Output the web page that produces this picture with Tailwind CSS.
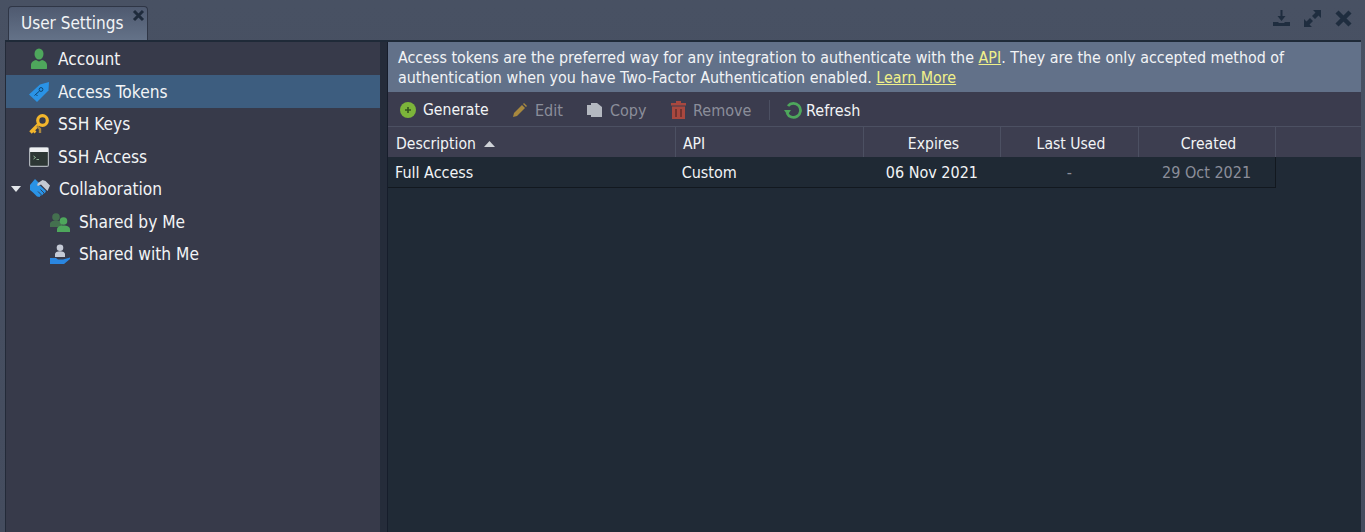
<!DOCTYPE html>
<html lang="en">
<head>
  <meta charset="UTF-8">
  <title>User Settings</title>
  <script src="https://cdn.jsdelivr.net/npm/@tailwindcss/browser@4"></script>
</head>
<body class="bg-[#475062] font-['DejaVu_Sans_Condensed','Noto_Sans',sans-serif] text-[16px] text-[#f2f4f6] overflow-hidden">
  <div class="w-[1365px] h-[532px] flex flex-col bg-gradient-to-b from-[#485163] to-[#444c5e]">
    <!-- tabs -->
    <div class="h-[40px] flex items-end justify-between pl-[8px] pr-[13px] shrink-0">
      <div class="relative w-[140px] h-[34px] bg-gradient-to-b from-[#4f5a70] to-[#647288] border border-[#2f3646] border-b-0 rounded-t-[4px] pl-[12px] pt-[3px] text-[17px] leading-[26px]">
        User Settings
        <svg class="absolute right-[2px] top-[2px]" width="13" height="13" viewBox="0 0 13 13"><path d="M2 2l9 9M11 2l-9 9" stroke="#1f2b3c" stroke-width="3"/></svg>
      </div>
      <div class="flex items-center gap-[14px] pb-[13px]">
        <svg width="17" height="17" viewBox="0 0 17 17" fill="#1f2d3f"><path d="M7.500 0h2v6h3l-4 5-4-5h3z"/><path d="M0 12h5l1 1h5l1-1h5v4H0z"/></svg>
        <svg width="17" height="17" viewBox="0 0 17 17" fill="#1f2d3f"><path d="M9 0H17V8L14.500 5.500 11 9 8 6 11.500 2.500z"/><path d="M8 17H0V9L2.500 11.500 6 8 9 11 5.500 14.500z"/></svg>
        <svg width="17" height="17" viewBox="0 0 17 17"><path d="M2 2l13 13M15 2 2 15" stroke="#1f2d3f" stroke-width="4.400"/></svg>
      </div>
    </div>
    <div class="flex-1 flex ml-[5px] mr-[4px] border-t-2 border-[#1f2a38] min-h-0">
      <!-- left tree -->
      <div class="w-[375px] bg-[#373a4a] border-l border-[#232a38] pt-[1px] shrink-0 text-[17.2px]">
        <div class="h-[32px] flex items-center pl-[23px] gap-[9px]">
          <svg width="20" height="22" viewBox="0 0 20 22" fill="#4ea75c"><ellipse cx="10" cy="6" rx="4.500" ry="5.500"/><path d="M3 21c-1 0-1-.5-1-1.500V17c0-3 3-4.500 5-5l3 1.500 3-1.500c2 .5 5 2 5 5v2.500c0 1 0 1.500-1 1.500z"/></svg>
          <span class="mt-[2px]">Account</span>
        </div>
        <div class="h-[33px] flex items-center pl-[23px] gap-[9px] bg-[#3d5d7f]">
          <svg width="20" height="20" viewBox="0 0 20 20"><path d="M0 12.500 11 2.500 20 0 19.500 8.500 8 20z" fill="#2a93e6"/><circle cx="12" cy="7.500" r="1.900" fill="none" stroke="#0f4470" stroke-width="1"/><path d="M10.500 9 5.500 13.500M7 12.500l1.500 1.500" stroke="#0f4470" stroke-width="1" fill="none"/></svg>
          <span class="mt-[2px]">Access Tokens</span>
        </div>
        <div class="h-[32px] flex items-center pl-[23px] gap-[9px]">
          <svg width="20" height="20" viewBox="0 0 20 20"><circle cx="13.500" cy="6.500" r="4.800" fill="none" stroke="#f3b62c" stroke-width="3.200"/><path d="M10 10 1.500 18.500" stroke="#f3b62c" stroke-width="3.600"/><path d="M8 12l3 3v4" stroke="#a98740" stroke-width="2.400" fill="none"/><path d="M4 16l2.500 2.500" stroke="#f3b62c" stroke-width="2.600"/></svg>
          <span class="mt-[2px]">SSH Keys</span>
        </div>
        <div class="h-[33px] flex items-center pl-[23px] gap-[9px]">
          <svg width="20" height="20" viewBox="0 0 20 20"><rect x=".6" y=".6" width="18.800" height="18.800" rx="1.500" fill="#2d3735" stroke="#aeb3ba" stroke-width="1.200"/><path d="M1 1h18v4H1z" fill="#eef0f2"/><path d="M4.500 9l2 1.500-2 1.500M7.500 12.500h2.500" stroke="#a9d4b0" fill="none" stroke-width=".8"/></svg>
          <span class="mt-[2px]">SSH Access</span>
        </div>
        <div class="h-[32px] flex items-center pl-[5px]">
          <svg class="mr-[9px]" width="10" height="6" viewBox="0 0 10 6" fill="#e3e6ea"><path d="M0 0h10L5 6z"/></svg>
          <svg class="mr-[9px]" width="20" height="20" viewBox="0 0 20 20"><path d="M0 6 5 0l4 4-2 2 3 .5 6 5.500-1 2-1.500.5-1 1.500-2 .5-1 1.500-2.500-.5-4-4-3-2.500z" fill="#2a93e6"/><path d="M8 4l4.500-3 3 1L20 6.500 17.500 12l-6.500-6.500-3 1.500-1-1z" fill="#c4c9d2"/><path d="M8 12.500l3.500 3.500M10.500 10.500l3.500 3.500" stroke="#373a4a" stroke-width=".9"/></svg>
          <span class="mt-[2px]">Collaboration</span>
        </div>
        <div class="h-[33px] flex items-center pl-[44px] gap-[9px]">
          <svg width="20" height="20" viewBox="0 0 20 20"><circle cx="6" cy="5" r="3.800" fill="#44704f"/><path d="M0 15v-3c0-2 2.500-3.500 6-3.500s5 1 6 3v3.500z" fill="#44704f"/><circle cx="13.500" cy="9" r="3.800" fill="#4ea75c"/><path d="M7 20v-2.800c0-2.200 3-3.700 6.500-3.700s6.500 1.500 6.500 3.700V20z" fill="#4ea75c"/></svg>
          <span class="mt-[2px]">Shared by Me</span>
        </div>
        <div class="h-[32px] flex items-center pl-[44px] gap-[9px]">
          <svg width="20" height="20" viewBox="0 0 20 20"><circle cx="10" cy="3.800" r="3.300" fill="#c5cad6"/><path d="M5 13v-3c0-1.600 2-2.800 5-2.800s5 1.200 5 2.800v3z" fill="#c5cad6"/><path d="M0 14h6l2 1.500h5l7-2v1.500l-6 5H0z" fill="#2a86e0"/></svg>
          <span class="mt-[2px]">Shared with Me</span>
        </div>
      </div>
      <!-- splitter -->
      <div class="w-[8px] bg-[#252c3a] border-r border-[#161d2b] shrink-0"></div>
      <!-- content -->
      <div class="flex-1 bg-[#202a36] flex flex-col min-w-0">
        <div class="h-[50px] bg-[#627189] px-[10px] pt-[6px] leading-[20px] text-[15.9px] shrink-0">
          Access tokens are the preferred way for any integration to authenticate with the <a class="text-[#f0f08a] underline">API</a>. They are the only accepted method of<br>
          authentication when you have Two-Factor Authentication enabled. <a class="text-[#f0f08a] underline">Learn More</a>
        </div>
        <div class="h-[35px] bg-[#3b3c4e] flex items-center pl-[12px] pt-[2px] border-b border-[#4c5062] shrink-0">
          <div class="flex items-center gap-[7px] w-[113px]">
            <svg width="16" height="16" viewBox="0 0 16 16"><circle cx="8" cy="8" r="8" fill="#7cb53a"/><path d="M8 5v6M5 8h6" stroke="#33551f" stroke-width="1.600"/></svg>
            <span class="text-[15.6px] mt-[2px]">Generate</span>
          </div>
          <div class="flex items-center gap-[7px] w-[74px] text-[#8b8e9a]">
            <svg width="15" height="16" viewBox="0 0 15 16"><path d="M0 15l1-4 8-8 3 3-8 8z" fill="#a8883e"/><path d="M10 2l1-1 3 3-1 1z" fill="#a8883e"/></svg>
            <span class="mt-[1px]">Edit</span>
          </div>
          <div class="flex items-center gap-[7px] w-[84px] text-[#8b8e9a]">
            <svg width="16" height="16" viewBox="0 0 16 16" fill="#b4b8c0"><path d="M0 3h6v10H0z"/><path d="M4 1h6l5 4v10H4z"/></svg>
            <span class="mt-[1px]">Copy</span>
          </div>
          <div class="flex items-center gap-[7px] w-[98px] text-[#8b8e9a]">
            <svg width="15" height="18" viewBox="0 0 15 18"><path d="M0 2h15v2.500H0zM5 0h5v2H5z" fill="#a8483f"/><path d="M1 5.500h13V18H1z" fill="#a8483f"/><path d="M5 8v8M10 8v8" stroke="#5c2c2c" stroke-width="1.400"/></svg>
            <span class="mt-[1px]">Remove</span>
          </div>
          <div class="w-px h-[20px] bg-[#4c5062] mr-[14px]"></div>
          <div class="flex items-center gap-[4px]">
            <svg width="18" height="18" viewBox="0 0 18 18" fill="none"><path d="M4 5a7 7 0 1 1-1 7" stroke="#4ea75c" stroke-width="2.800"/><path d="M0 9h7l-3.500 5z" fill="#4ea75c"/></svg>
            <span class="mt-[1px]">Refresh</span>
          </div>
        </div>
        <div class="h-[30px] bg-[#3d3e50] flex leading-[34px] text-[15.6px] shrink-0">
          <div class="w-[288px] pl-[8px] pt-[4px] leading-[26px] border-r border-[#4c5062] flex items-center gap-[8px]">Description <svg width="11" height="6" viewBox="0 0 11 6" fill="#d0d3d8"><path d="M0 6h11L5.500 0z"/></svg></div>
          <div class="w-[188px] pl-[7px] border-r border-[#4c5062]">API</div>
          <div class="w-[137px] pl-[3px] text-center border-r border-[#4c5062]">Expires</div>
          <div class="w-[138px] pl-[3px] text-center border-r border-[#4c5062]">Last Used</div>
          <div class="w-[137px] pl-[3px] text-center border-r border-[#4c5062]">Created</div>
        </div>
        <div class="h-[31px] w-[888px] bg-[#1f2934] flex leading-[32px] border-b border-r border-[#12181f] shrink-0">
          <div class="w-[288px] pl-[7px]">Full Access</div>
          <div class="w-[188px] pl-[6px]">Custom</div>
          <div class="w-[137px] text-center">06 Nov 2021</div>
          <div class="w-[138px] text-center text-[#8b8e9a]">-</div>
          <div class="w-[137px] text-center text-[#8b8e9a]">29 Oct 2021</div>
        </div>
      </div>
    </div>
  </div>
</body>
</html>
